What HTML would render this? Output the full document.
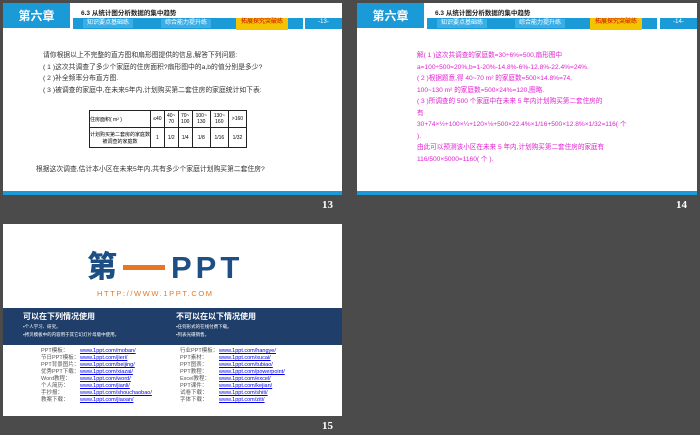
<!DOCTYPE html>
<html><head><meta charset="utf-8"><style>
*{margin:0;padding:0;box-sizing:border-box}
body{width:700px;height:435px;background:#4b4b4b;position:relative;overflow:hidden;font-family:"Liberation Sans","Noto Sans CJK SC",sans-serif}
.s{position:absolute;background:#fff;overflow:hidden}
.a{position:absolute;white-space:nowrap}
.blue{background:#1a9ad6}
.num{position:absolute;color:#fff;font-weight:bold;font-size:11px;font-family:"Liberation Serif",serif}
.t{color:#fff;font-size:6px;text-align:center;line-height:9px}
.tb{background:#3aaee6}
table{border-collapse:collapse}
td{border:1px solid #222;font-size:5px;text-align:center;padding:0}
.pk{color:#e020d0;font-size:6.6px;line-height:11.5px}
.ln{font-size:5.5px;line-height:7px}
.ln a{color:#00e;text-decoration:underline}
</style></head><body>

<!-- slide 13 -->
<div class="s" style="left:3px;top:3px;width:339px;height:192px">
 <div class="a blue" style="left:0;top:0;width:67px;height:25px"></div>
 <div class="a" style="left:0;top:4px;width:67px;text-align:center;color:#fff;font-weight:bold;font-size:12px">第六章</div>
 <div class="a" style="left:78px;top:4px;font-size:6.5px;font-weight:bold;color:#222">6.3 从统计图分析数据的集中趋势</div>
 <div class="a blue" style="left:70px;top:15px;width:230px;height:11px"></div>
 <div class="a t tb" style="left:80px;top:16px;width:50px">知识要点基础练</div>
 <div class="a t tb" style="left:158px;top:16px;width:50px">综合能力提升练</div>
 <div class="a t" style="left:233px;top:15px;width:52px;height:12px;background:#f5c400;color:#c00">拓展探究突破练</div>
 <div class="a blue t" style="left:302px;top:15px;width:37px;height:11px">-13-</div>
 <div class="a" style="left:40px;top:47px;font-size:6.8px;line-height:11.5px;color:#333">请你根据以上不完整的直方图和扇形图提供的信息,解答下列问题:<br>( 1 )这次共调查了多少个家庭的住房面积?扇形图中的a,b的值分别是多少?<br>( 2 )补全频率分布直方图.<br>( 3 )被调查的家庭中,在未来5年内,计划购买第二套住房的家庭统计如下表:</div>
 <table class="a" style="left:86px;top:107px;width:158px;height:38px">
  <tr><td style="width:50px;text-align:left">住房面积( m² )</td><td>≤40</td><td>40~<br>70</td><td>70~<br>100</td><td>100~<br>130</td><td>130~<br>160</td><td>&gt;160</td></tr>
  <tr><td>计划购买第二套房的家庭数<br>被调查的家庭数</td><td>1</td><td>1/2</td><td>1/4</td><td>1/8</td><td>1/16</td><td>1/32</td></tr>
 </table>
 <div class="a" style="left:33px;top:160px;font-size:6.8px;color:#333">根据这次调查,估计本小区在未来5年内,共有多少个家庭计划购买第二套住房?</div>
 <div class="a blue" style="left:0;top:188px;width:339px;height:4px"></div>
</div>
<div class="num" style="left:322px;top:199px">13</div>

<!-- slide 14 -->
<div class="s" style="left:357px;top:3px;width:340px;height:192px">
 <div class="a blue" style="left:0;top:0;width:67px;height:25px"></div>
 <div class="a" style="left:0;top:4px;width:67px;text-align:center;color:#fff;font-weight:bold;font-size:12px">第六章</div>
 <div class="a" style="left:78px;top:4px;font-size:6.5px;font-weight:bold;color:#222">6.3 从统计图分析数据的集中趋势</div>
 <div class="a blue" style="left:70px;top:15px;width:230px;height:11px"></div>
 <div class="a t tb" style="left:80px;top:16px;width:50px">知识要点基础练</div>
 <div class="a t tb" style="left:158px;top:16px;width:50px">综合能力提升练</div>
 <div class="a t" style="left:233px;top:15px;width:52px;height:12px;background:#f5c400;color:#c00">拓展探究突破练</div>
 <div class="a blue t" style="left:303px;top:15px;width:37px;height:11px">-14-</div>
 <div class="a pk" style="left:60px;top:47px">解( 1 )这次共调查的家庭数=30÷6%=500,扇形图中<br>a=100÷500=20%,b=1-20%-14.8%-6%-12.8%-22.4%=24%.<br>( 2 )根据题意,得 40~70 m² 的家庭数=500×14.8%=74,<br>100~130 m² 的家庭数=500×24%=120,图略.<br>( 3 )所调查的 500 个家庭中在未来 5 年内计划购买第二套住房的<br>有<br>30+74×½+100×¼+120×⅛+500×22.4%×1/16+500×12.8%×1/32=116( 个<br>).<br>由此可以预测该小区在未来 5 年内,计划购买第二套住房的家庭有<br>116/500×5000=1160( 个 ).</div>
 <div class="a blue" style="left:0;top:188px;width:340px;height:4px"></div>
</div>
<div class="num" style="left:676px;top:199px">14</div>

<!-- slide 15 -->
<div class="s" style="left:3px;top:224px;width:339px;height:192px">
 <div class="a" style="left:84px;top:28px;font-size:30px;line-height:32px;font-weight:900;color:#1d4f85">第</div>
 <div class="a" style="left:120px;top:41px;width:42px;height:5px;background:#e87722"></div>
 <div class="a" style="left:168px;top:28px;font-size:31px;line-height:32px;font-weight:900;color:#1d4f85;letter-spacing:4px">PPT</div>
 <div class="a" style="left:94px;top:65px;font-size:7.5px;color:#e87722;letter-spacing:1.6px">HTTP://WWW.1PPT.COM</div>
 <div class="a" style="left:0;top:84px;width:339px;height:37px;background:#1f3f6a"></div>
 <div class="a" style="left:20px;top:87px;color:#fff;font-weight:bold;font-size:8px">可以在下列情况使用</div>
 <div class="a" style="left:20px;top:99px;color:#fff;font-size:4.5px;line-height:8px">▪个人学习、研究。<br>▪拷贝模板中的内容用于其它幻灯片母版中使用。</div>
 <div class="a" style="left:173px;top:87px;color:#fff;font-weight:bold;font-size:8px">不可以在以下情况使用</div>
 <div class="a" style="left:173px;top:99px;color:#fff;font-size:4.5px;line-height:8px">▪任何形式的在线付费下载。<br>▪列表光碟销售。</div>
 <div class="a ln" style="left:38px;top:124px;color:#555">PPT模板：<br>节日PPT模板：<br>PPT背景图片：<br>优秀PPT下载：<br>Word教程：<br>个人简历：<br>手抄报：<br>教案下载：</div>
 <div class="a ln" style="left:77px;top:124px"><a>www.1ppt.com/moban/</a><br><a>www.1ppt.com/jieri/</a><br><a>www.1ppt.com/beijing/</a><br><a>www.1ppt.com/xiazai/</a><br><a>www.1ppt.com/word/</a><br><a>www.1ppt.com/jianli/</a><br><a>www.1ppt.com/shouchaobao/</a><br><a>www.1ppt.com/jiaoan/</a></div>
 <div class="a ln" style="left:177px;top:124px;color:#555">行业PPT模板：<br>PPT素材：<br>PPT图表：<br>PPT教程：<br>Excel教程：<br>PPT课件：<br>试卷下载：<br>字体下载：</div>
 <div class="a ln" style="left:216px;top:124px"><a>www.1ppt.com/hangye/</a><br><a>www.1ppt.com/sucai/</a><br><a>www.1ppt.com/tubiao/</a><br><a>www.1ppt.com/powerpoint/</a><br><a>www.1ppt.com/excel/</a><br><a>www.1ppt.com/kejian/</a><br><a>www.1ppt.com/shiti/</a><br><a>www.1ppt.com/ziti/</a></div>
</div>
<div class="num" style="left:322px;top:420px">15</div>
</body></html>
